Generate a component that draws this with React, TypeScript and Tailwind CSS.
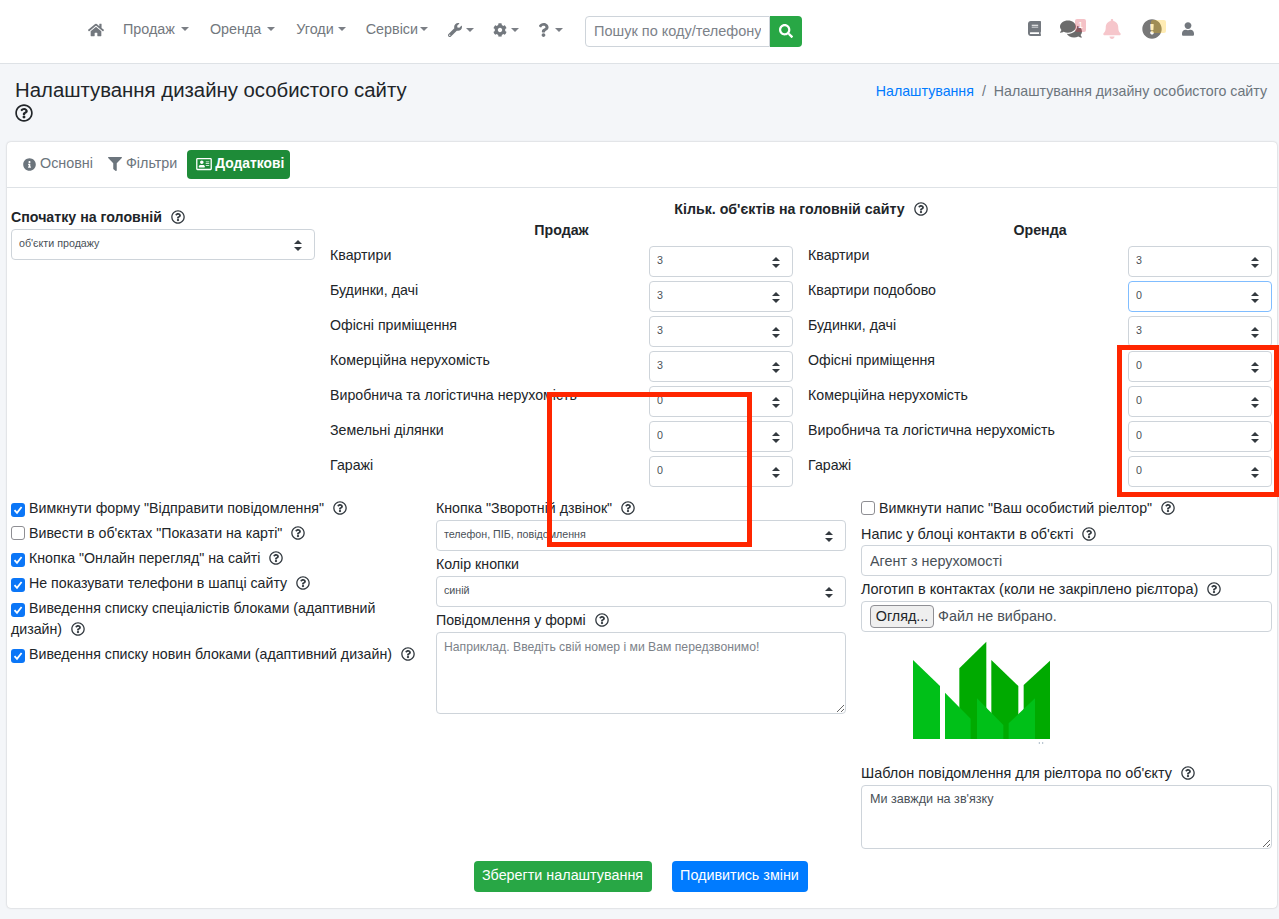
import React from "react";
import { FaHome, FaWrench, FaCog, FaQuestion, FaSearch, FaBook, FaComments, FaBell, FaExclamationCircle, FaUser, FaInfoCircle, FaFilter, FaRegAddressCard, FaRegQuestionCircle } from "react-icons/fa";

const Caret = ({ cls }: { cls: string }) => <span className={`inline-block w-0 h-0 border-x-[4px] border-x-transparent border-t-[4px] border-t-[#7b7f85] ${cls}`} />;

const Help = () => (
  <FaRegQuestionCircle className="inline-block w-[14px] h-[14px] text-[#333a40] align-[-2px] ml-[9px]" />
);

const Select = ({ v, wide, focus }: { v: string; wide?: boolean; focus?: boolean }) => (
  <div className={`relative h-[31px] ${wide ? "w-full" : "w-[144px]"}`}>
    <select
      defaultValue={v}
      className={`appearance-none w-full h-full rounded-[4px] border bg-white pl-[7px] pb-[3px] text-[10.7px] text-[#495057] outline-none ${focus ? "border-[#80bdff]" : "border-[#ced4da]"}`}
    >
      <option>{v}</option>
    </select>
    <svg className="absolute right-[13px] top-[11px] pointer-events-none" width="8" height="11" viewBox="0 0 8 11">
      <path d="M4 0 L8 4 H0 Z M0 7 H8 L4 11 Z" fill="#343a40" />
    </svg>
  </div>
);

const Row = ({ label, v, focus }: { label: string; v: string; focus?: boolean }) => (
  <div className="flex justify-between h-[35px]">
    <span className="mt-[-1px] leading-[21px]">{label}</span>
    <Select v={v} focus={focus} />
  </div>
);

const Check = ({ on }: { on: boolean }) =>
  on ? (
    <span className="inline-flex items-center justify-center w-[14px] h-[14px] rounded-[3px] bg-[#0b76f7] align-[-2px] mr-[4px]">
      <svg width="10" height="10" viewBox="0 0 10 10"><path d="M1.5 5.2 L4 7.8 L8.6 2" stroke="#fff" strokeWidth="1.8" fill="none" /></svg>
    </span>
  ) : (
    <span className="inline-block w-[14px] h-[14px] rounded-[3px] bg-white border border-[#8e8e93] align-[-2px] mr-[4px]" />
  );

const CheckLine = ({ on, children }: { on: boolean; children: React.ReactNode }) => (
  <div className="leading-[21px] mb-[4px]">
    <Check on={on} />
    {children}
    <Help />
  </div>
);

const NavItem = ({ children, cls, caret }: { children: React.ReactNode; cls: string; caret: string }) => (
  <span className={`flex items-center ${cls}`}>{children}<Caret cls={caret} /></span>
);

const Logo = () => (
  <svg className="block ml-[51px] mt-[8px]" width="140" height="105" viewBox="186 60 420 315">
    <g fill="#00aa00">
      <polygon points="328,145 409,65 409,357 328,357" />
      <polygon points="424,120 505,198 505,357 424,357" />
      <polygon points="521,195 600,122 600,357 521,357" />
    </g>
    <g fill="#00c018">
      <polygon points="189,120 270,198 270,357 189,357" />
      <polygon points="285,218 362,296 362,357 285,357" />
      <polygon points="381,235 460,315 460,357 381,357" />
      <polygon points="476,310 555,235 555,357 476,357" />
    </g>
    <circle cx="568" cy="369" r="2" fill="#8aa0b0" />
    <circle cx="578" cy="369" r="2" fill="#8aa0b0" />
  </svg>
);

export default function App() {
  return (
    <div className="relative min-h-[919px] bg-[#f4f6f9] text-[14.2px] text-[#212529] [font-family:'Liberation_Sans',Arial,sans-serif]">
      <nav className="h-[64px] bg-white border-b border-[#dee2e6] flex items-center pl-[88px] pb-[4px] text-[14.35px] text-[#73787e]">
        <FaHome className="w-[16px] h-[16px] mr-[19px]" />
        <NavItem cls="mr-[21px]" caret="ml-[6px]">Продаж</NavItem>
        <NavItem cls="mr-[21px]" caret="ml-[6px]">Оренда</NavItem>
        <NavItem cls="mr-[20px]" caret="ml-[4px]">Угоди</NavItem>
        <NavItem cls="mr-[20px]" caret="ml-[2px]">Сервіси</NavItem>
        <NavItem cls="mr-[19px]" caret="ml-[4px]"><FaWrench className="w-[14px] h-[14px]" /></NavItem>
        <NavItem cls="mr-[19px]" caret="ml-[4px]"><FaCog className="w-[14px] h-[14px]" /></NavItem>
        <NavItem cls="mr-[22px]" caret="ml-[6px]"><FaQuestion className="w-[11px] h-[14px]" /></NavItem>
        <div className="flex h-[31px] mt-[3px]">
          <input placeholder="Пошук по коду/телефону" className="w-[185px] h-full px-[8px] border border-[#ced4da] rounded-l-[4px] bg-white text-[14.5px] placeholder:text-[#7c8289] outline-none" />
          <button className="w-[32px] h-full bg-[#28a745] rounded-r-[4px] flex items-center justify-center"><FaSearch className="w-[14px] h-[14px] text-white" /></button>
        </div>
        <div className="ml-[226px] flex items-center h-[20px] mt-[-2px]">
          <FaBook className="w-[13px] h-[15px] mr-[19px]" />
          <span className="relative mr-[16px] w-[26px] h-[20px] flex items-center">
            <FaComments className="w-[22px] h-[20px] text-[#6b6b6b]" />
            <span className="absolute right-0 top-[0px] w-[11px] h-[13px] rounded-[2px] bg-[#dc3545]/30 text-[9px] leading-[13px] text-center text-white">1</span>
          </span>
          <FaBell className="w-[20px] h-[20px] text-[#f6c6cb] mr-[20px]" />
          <span className="relative mr-[16px] w-[24px] h-[20px] flex items-center">
            <FaExclamationCircle className="w-[20px] h-[20px] text-[#777777]" />
            <span className="absolute right-0 top-[1px] w-[15px] h-[13px] rounded-[2px] bg-[#ffc107]/30" />
          </span>
          <FaUser className="w-[12px] h-[14px]" />
        </div>
      </nav>

      <header className="flex justify-between pl-[15px] pr-[12px] pt-[13px] h-[78px]">
        <h1 className="w-[400px] text-[20.35px] leading-[26px] font-normal m-0">
          Налаштування дизайну особистого сайту
          <FaRegQuestionCircle className="block mt-[1px] w-[18px] h-[18px]" />
        </h1>
        <div className="mt-[4px] leading-[21px] text-[#6c757d]">
          <span className="text-[#007bff]">Налаштування</span>
          <span className="mx-[8px]">/</span>
          Налаштування дизайну особистого сайту
        </div>
      </header>

      <main className="mx-[7px] w-[1270px] h-[766px] bg-white rounded-[4px] shadow-[0_0_2px_rgba(0,0,0,0.25)]">
        <div className="h-[46px] border-b border-[#dee2e6] flex items-center pl-[16px] pb-[1px] text-[14.35px] text-[#6c757d]">
          <FaInfoCircle className="w-[13px] h-[13px] mr-[4px]" />
          <span className="mr-[15px]">Основні</span>
          <FaFilter className="w-[14px] h-[14px] mr-[4px]" />
          <span className="mr-[10px]">Фільтри</span>
          <span className="h-[29px] w-[103px] rounded-[4px] bg-[#1e8b38] text-white font-bold text-[13.8px] flex items-center pl-[9px]">
            <FaRegAddressCard className="w-[16px] h-[14px] mr-[3px]" />
            Додаткові
          </span>
        </div>

        <div className="px-[4px]">
          <section className="flex gap-[15px]">
            <div className="w-[304px] pt-[19px]">
              <div className="font-bold leading-[21px] mb-[1px]">Спочатку на головній<Help /></div>
              <Select v="об'єкти продажу" wide />
            </div>
            <div className="w-[942px] pt-[11px]">
              <div className="text-center font-bold leading-[21px] h-[21px]">Кільк. об'єктів на головній сайту<Help /></div>
              <div className="grid grid-cols-[463px_464px] gap-x-[15px]">
                <div>
                  <div className="text-center font-bold leading-[21px] h-[26px]">Продаж</div>
                  <Row label="Квартири" v="3" />
                  <Row label="Будинки, дачі" v="3" />
                  <Row label="Офісні приміщення" v="3" />
                  <Row label="Комерційна нерухомість" v="3" />
                  <Row label="Виробнича та логістична нерухомість" v="0" />
                  <Row label="Земельні ділянки" v="0" />
                  <Row label="Гаражі" v="0" />
                </div>
                <div>
                  <div className="text-center font-bold leading-[21px] h-[26px]">Оренда</div>
                  <Row label="Квартири" v="3" />
                  <Row label="Квартири подобово" v="0" focus />
                  <Row label="Будинки, дачі" v="3" />
                  <Row label="Офісні приміщення" v="0" />
                  <Row label="Комерційна нерухомість" v="0" />
                  <Row label="Виробнича та логістична нерухомість" v="0" />
                  <Row label="Гаражі" v="0" />
                </div>
              </div>
            </div>
          </section>

          <section className="grid grid-cols-[410px_410px_411px] gap-x-[15px] mt-[6px]">
            <div className="pt-[1px]">
              <CheckLine on>Вимкнути форму "Відправити повідомлення"</CheckLine>
              <CheckLine on={false}>Вивести в об'єктах "Показати на карті"</CheckLine>
              <CheckLine on>Кнопка "Онлайн перегляд" на сайті</CheckLine>
              <CheckLine on>Не показувати телефони в шапці сайту</CheckLine>
              <CheckLine on>Виведення списку спеціалістів блоками (адаптивний дизайн)</CheckLine>
              <CheckLine on>Виведення списку новин блоками (адаптивний дизайн)</CheckLine>
            </div>
            <div className="pt-[1px]">
              <div className="leading-[21px] mb-[1px]">Кнопка "Зворотній дзвінок"<Help /></div>
              <Select v="телефон, ПІБ, повідомлення" wide />
              <div className="leading-[21px] mt-[3px] mb-[1px]">Колір кнопки</div>
              <Select v="синій" wide />
              <div className="leading-[21px] mt-[3px] mb-[1px]">Повідомлення у формі<Help /></div>
              <textarea
                placeholder="Наприклад. Введіть свій номер і ми Вам передзвонимо!"
                className="block w-full h-[82px] border border-[#ced4da] rounded-[4px] px-[7px] py-[5px] text-[12.2px] leading-[18px] placeholder:text-[#7c8289] outline-none"
              />
            </div>
            <div className="pt-[1px]">
              <div className="leading-[21px] mb-[5px]"><Check on={false} />Вимкнути напис "Ваш особистий ріелтор"<Help /></div>
              <div className="leading-[21px] text-[14.4px]">Напис у блоці контакти в об'єкті<Help /></div>
              <input defaultValue="Агент з нерухомості" className="block w-full h-[31px] border border-[#ced4da] rounded-[4px] px-[8px] text-[14.35px] text-[#495057] outline-none" />
              <div className="leading-[21px] mt-[3px] mb-[1px] text-[14.5px]">Логотип в контактах (коли не закріплено рієлтора)<Help /></div>
              <div className="h-[31px] border border-[#ced4da] rounded-[4px] flex items-center pl-[8px] text-[14.35px] text-[#495057]">
                <span className="h-[23px] w-[64px] bg-[#efefef] border border-[#8f8f94] rounded-[4px] flex items-center justify-center text-[#212529] mr-[4px]">Огляд...</span>
                Файл не вибрано.
              </div>
              <Logo />
              <div className="leading-[21px] mt-[18px] mb-[1px] text-[14.4px]">Шаблон повідомлення для ріелтора по об'єкту<Help /></div>
              <textarea defaultValue="Ми завжди на зв'язку" className="block w-full h-[64px] border border-[#ced4da] rounded-[4px] px-[8px] py-[4px] text-[12.6px] leading-[18px] text-[#495057] outline-none" />
            </div>
          </section>

          <div className="flex justify-center gap-[20px] mt-[12px] pr-[3px] text-[14.35px]">
            <button className="h-[31px] w-[178px] rounded-[4px] bg-[#28a745] text-white pb-[2px]">Зберегти налаштування</button>
            <button className="h-[31px] w-[136px] rounded-[4px] bg-[#007bff] text-white pb-[2px]">Подивитись зміни</button>
          </div>
        </div>
      </main>

      <div className="absolute left-[547px] top-[392px] w-[205px] h-[155px] border-[5px] border-[#ff2600] pointer-events-none" />
      <div className="absolute left-[1117px] top-[345px] w-[162px] h-[152px] border-[5px] border-[#ff2600] pointer-events-none" />
    </div>
  );
}
